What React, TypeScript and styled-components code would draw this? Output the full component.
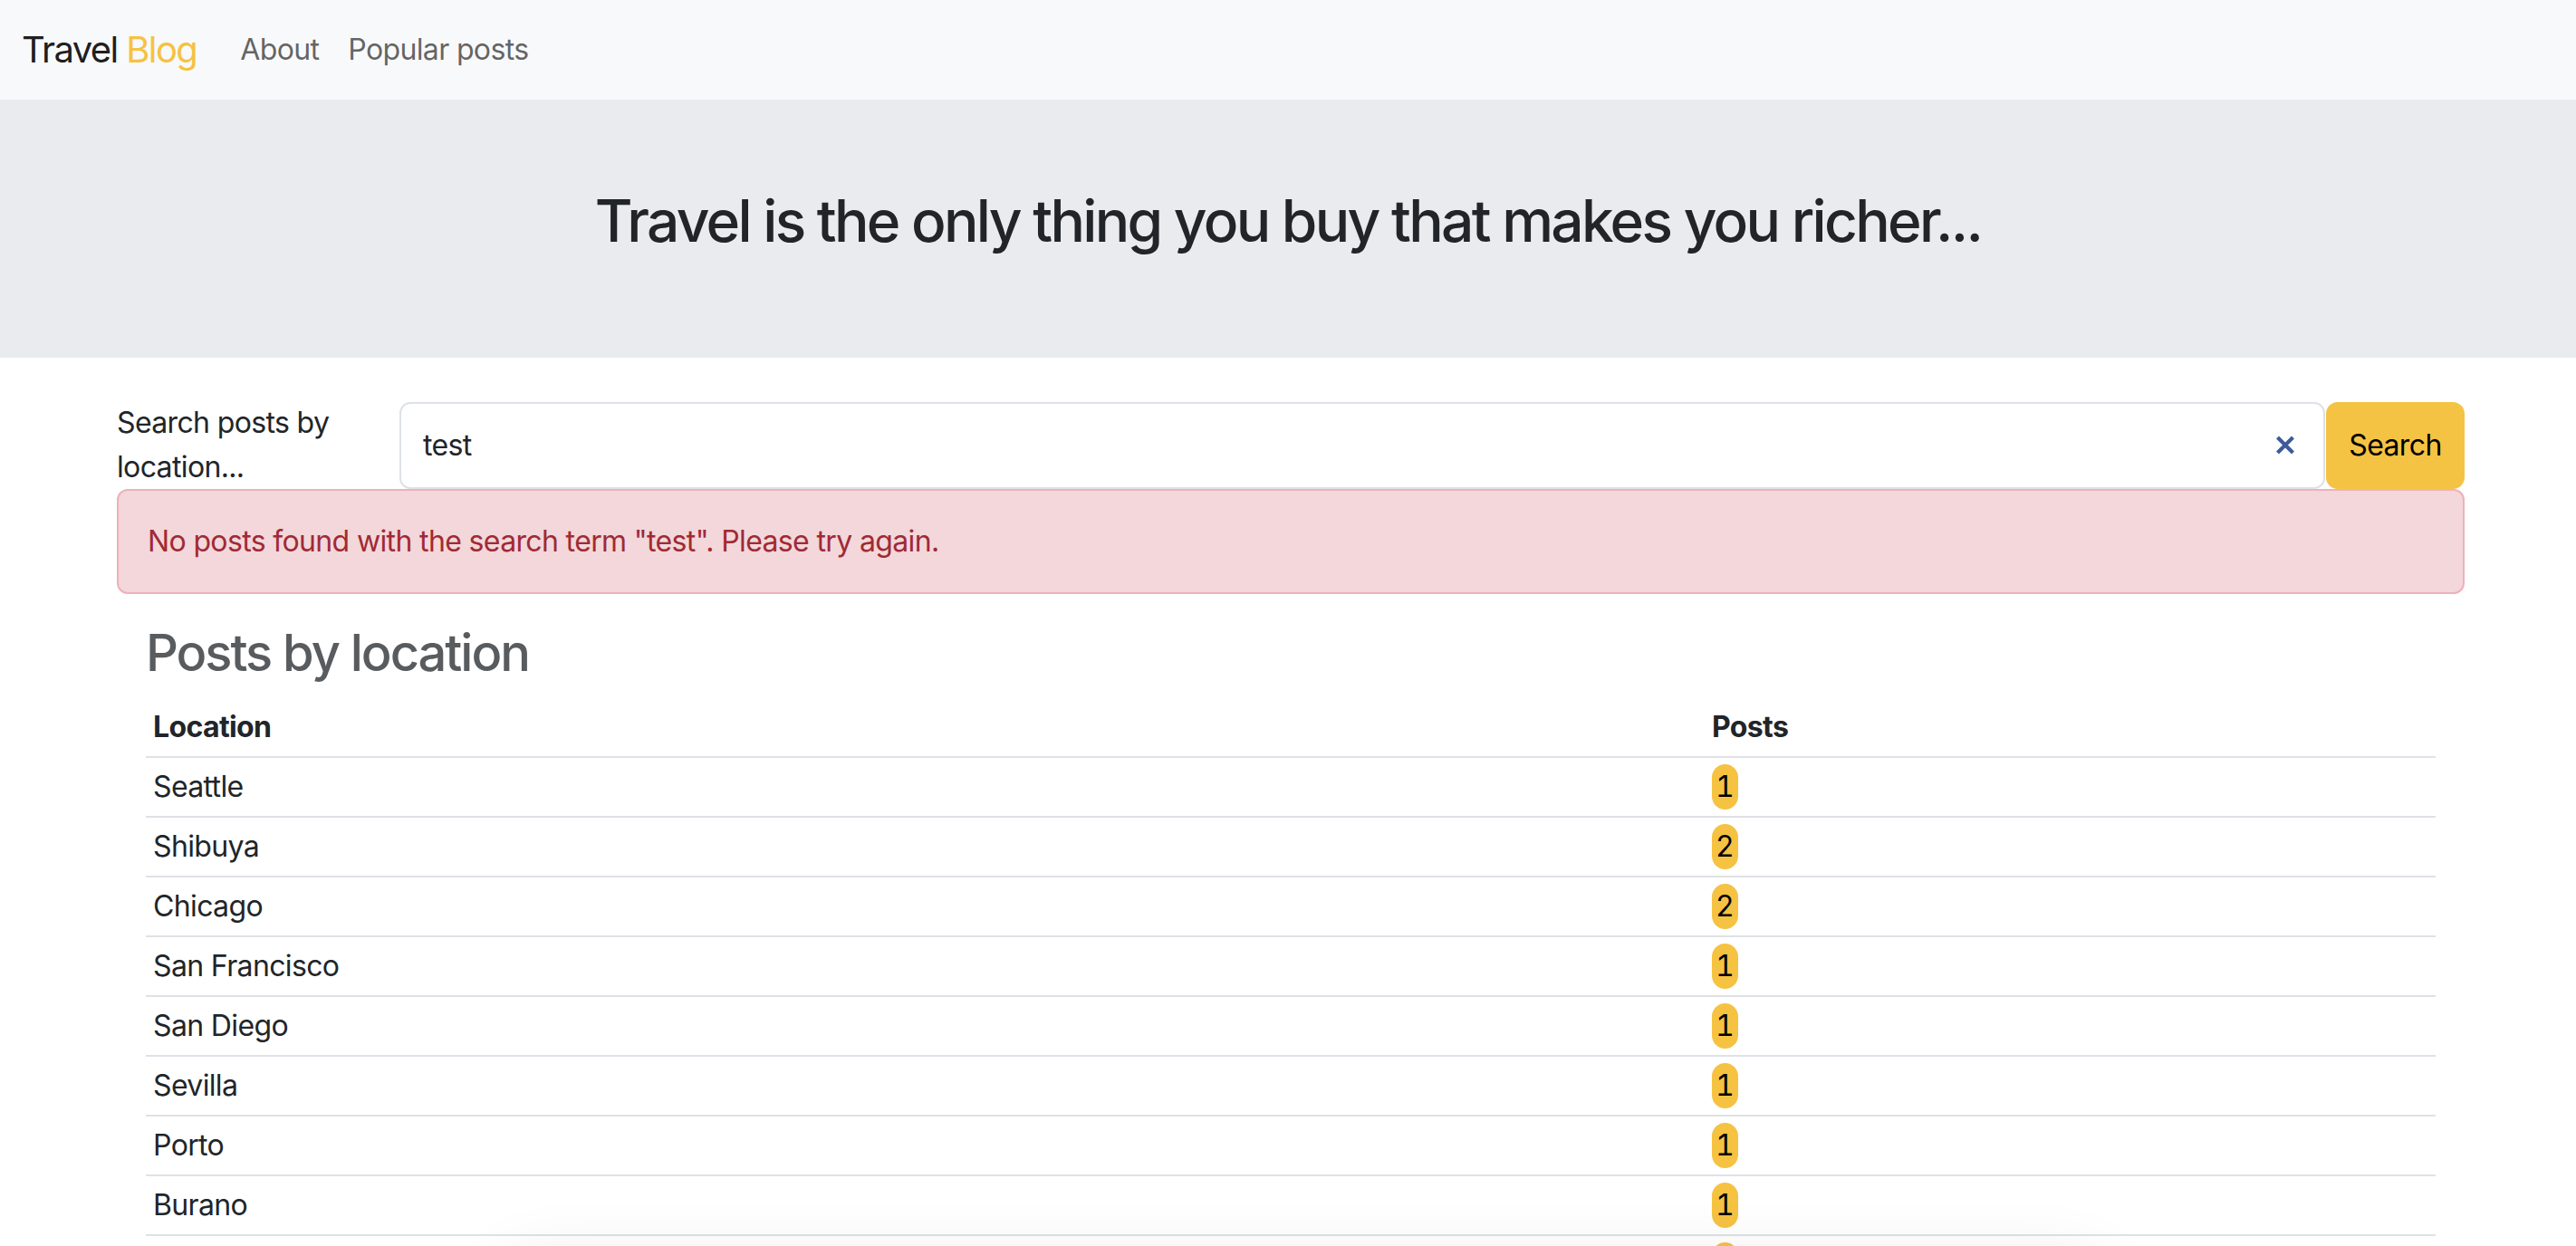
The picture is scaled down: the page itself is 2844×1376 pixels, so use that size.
import React from "react";
import styled, { createGlobalStyle } from "styled-components";

const Global = createGlobalStyle`
  html, body { margin: 0; padding: 0; background: #fff; }
  body {
    font-family: Inter, "Noto Sans", "Liberation Sans", sans-serif;
    font-size: 32px;
    line-height: 1.5;
    letter-spacing: -0.02em;
    color: #212529;
    overflow: hidden;
  }
  * { box-sizing: border-box; }
`;

const NavBar = styled.nav`
  height: 110px;
  background: #f8f9fa;
  display: flex;
  align-items: center;
  padding: 0 24px;
`;

const Brand = styled.a`
  font-size: 40px;
  line-height: 60px;
  letter-spacing: -0.04em;
  color: rgba(0, 0, 0, 0.9);
  text-decoration: none;
  margin-right: 32px;
`;

const BrandAccent = styled.span`
  color: #f5c242;
`;

const NavLink = styled.a`
  font-size: 32px;
  line-height: 48px;
  padding: 0 16px;
  color: rgba(0, 0, 0, 0.62);
  text-decoration: none;
`;

const Hero = styled.header`
  background: #eaebef;
  padding: 96px 0;
  text-align: center;
`;

const HeroTitle = styled.h2`
  margin: 0 0 16px;
  font-size: 64px;
  line-height: 1.2;
  font-weight: 500;
  letter-spacing: -0.042em;
  color: #212529;
`;

const Main = styled.main`
  padding: 49px 123px 0 129px;
`;

const SearchRow = styled.form`
  display: flex;
  align-items: flex-start;
  height: 96px;
`;

const SearchLabel = styled.label`
  width: 312px;
  flex: none;
  padding-right: 24px;
  font-size: 32px;
  line-height: 49px;
  margin-top: -2px;
  color: #212529;
`;

const InputGroup = styled.div`
  flex: 1;
  display: flex;
  height: 96px;
`;

const InputBox = styled.div`
  flex: 1;
  display: flex;
  align-items: center;
  border: 2px solid #dee2e6;
  border-radius: 12px;
  background: #fff;
  padding: 0 32px 0 24px;
`;

const SearchInput = styled.input`
  flex: 1;
  border: none;
  outline: none;
  background: transparent;
  font-family: inherit;
  font-size: 32px;
  letter-spacing: -0.02em;
  color: #212529;
  padding: 0;
  height: 48px;
`;

const ClearButton = styled.button`
  border: none;
  background: transparent;
  padding: 0;
  width: 20px;
  height: 21px;
  display: flex;
  cursor: pointer;
`;

const SearchButton = styled.button`
  flex: none;
  width: 153px;
  margin-left: 1px;
  border: none;
  border-radius: 13px;
  background: #f5c344;
  color: #000;
  font-family: inherit;
  font-size: 32px;
  letter-spacing: -0.02em;
`;

const Alert = styled.div`
  border: 2px solid #ecb2b8;
  background: #f3d7da;
  color: #a02a35;
  border-radius: 12px;
  padding: 32px 32px;
  line-height: 48px;
  margin-bottom: 32px;
`;

const Section = styled.section`
  padding: 0 32px;
`;

const SectionTitle = styled.h3`
  margin: 0 0 16px;
  font-size: 56px;
  line-height: 1.2;
  font-weight: 500;
  letter-spacing: -0.036em;
  color: #595c5f;
`;

const Table = styled.table`
  width: 100%;
  border-collapse: collapse;
`;

const Th = styled.th`
  text-align: left;
  font-weight: 700;
  padding: 8px;
  line-height: 48px;
  border-bottom: 2px solid #dee2e6;
`;

const Td = styled.td`
  padding: 8px;
  line-height: 48px;
  border-bottom: 2px solid #dee2e6;
`;

const CountBadge = styled.span`
  display: inline-block;
  background: #f5c242;
  color: #000;
  border-radius: 20px;
  padding: 0 4px;
  line-height: 50px;
  margin: -1px 0;
  vertical-align: top;
  letter-spacing: 0;
  font-variant-numeric: tabular-nums;
`;

const BottomShade = styled.div`
  position: fixed;
  left: 560px;
  width: 1760px;
  top: 1400px;
  height: 200px;
  border-radius: 40px;
  background: #fff;
  box-shadow: 0 0 70px 16px rgba(0, 0, 0, 0.07);
`;

const rows: [string, number][] = [
  ["Seattle", 1],
  ["Shibuya", 2],
  ["Chicago", 2],
  ["San Francisco", 1],
  ["San Diego", 1],
  ["Sevilla", 1],
  ["Porto", 1],
  ["Burano", 1],
  ["Kyoto", 1],
];

export default function App() {
  return (
    <>
      <Global />
      <NavBar>
        <Brand href="#">
          Travel <BrandAccent>Blog</BrandAccent>
        </Brand>
        <NavLink href="#">About</NavLink>
        <NavLink href="#">Popular posts</NavLink>
      </NavBar>
      <Hero>
        <HeroTitle>Travel is the only thing you buy that makes you richer...</HeroTitle>
      </Hero>
      <Main>
        <SearchRow onSubmit={(e) => e.preventDefault()}>
          <SearchLabel htmlFor="q">Search posts by location...</SearchLabel>
          <InputGroup>
            <InputBox>
              <SearchInput id="q" defaultValue="test" />
              <ClearButton type="button" aria-label="clear">
                <svg width="20" height="21" viewBox="0 0 20 21">
                  <path
                    d="M3 3.5 L17 17.5 M17 3.5 L3 17.5"
                    stroke="#3d5b9b"
                    strokeWidth="4.2"
                    strokeLinecap="square"
                  />
                </svg>
              </ClearButton>
            </InputBox>
            <SearchButton type="submit">Search</SearchButton>
          </InputGroup>
        </SearchRow>
        <Alert>No posts found with the search term "test". Please try again.</Alert>
        <Section>
          <SectionTitle>Posts by location</SectionTitle>
          <Table>
            <colgroup>
              <col style={{ width: 1721 }} />
              <col />
            </colgroup>
            <thead>
              <tr>
                <Th>Location</Th>
                <Th>Posts</Th>
              </tr>
            </thead>
            <tbody>
              {rows.map(([name, n]) => (
                <tr key={name}>
                  <Td>{name}</Td>
                  <Td>
                    <CountBadge>{n}</CountBadge>
                  </Td>
                </tr>
              ))}
            </tbody>
          </Table>
        </Section>
      </Main>
      <BottomShade />
    </>
  );
}
